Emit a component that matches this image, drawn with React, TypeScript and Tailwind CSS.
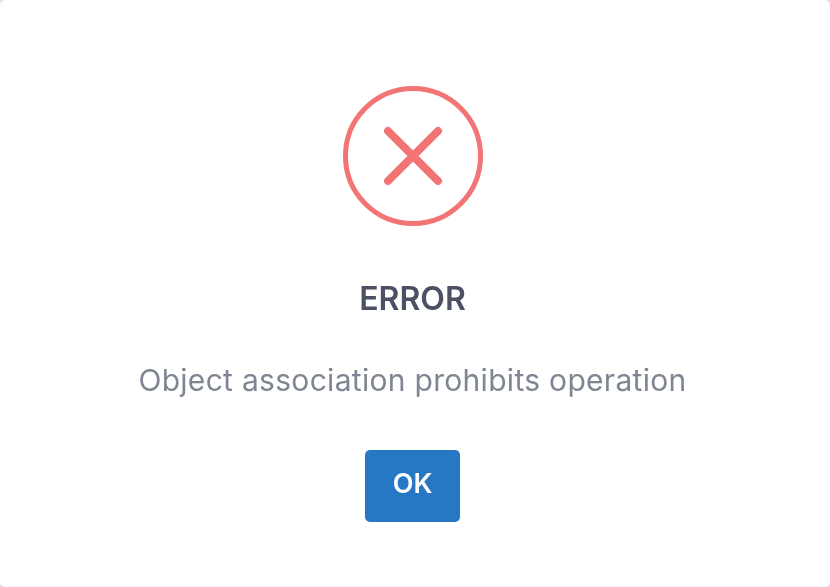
import React from "react";

const ErrorIcon = () => (
    <svg className="w-[140px] h-[140px]" viewBox="0 0 140 140" fill="none" stroke="#f27474" strokeLinecap="round">
        <circle cx="70" cy="70" r="67.5" strokeWidth="5" />
        <path d="M45 45 L95 95 M95 45 L45 95" strokeWidth="8" />
    </svg>
);

export default function App() {
    return (
        <div className="w-[830px] h-[587px] bg-[#e4e4e4] font-['Inter','Liberation_Sans',sans-serif]">
            <div className="w-full h-full bg-white rounded-[6px] flex flex-col items-center pt-[86px] pr-[5px] blur-[0.4px]">
                <ErrorIcon />
                <h2 className="mt-[53px] h-[40px] leading-[40px] text-[32px] font-semibold text-[#4c5064]">ERROR</h2>
                <p className="mt-[41px] h-[40px] leading-[40px] text-[30px] tracking-[0.3px] text-[#7f8593] whitespace-nowrap">Object association prohibits operation</p>
                <button className="mt-[50px] w-[95px] h-[72px] pb-[4px] rounded-[5px] bg-[#2778c4] text-white text-[27px] font-semibold">OK</button>
            </div>
        </div>
    );
}
